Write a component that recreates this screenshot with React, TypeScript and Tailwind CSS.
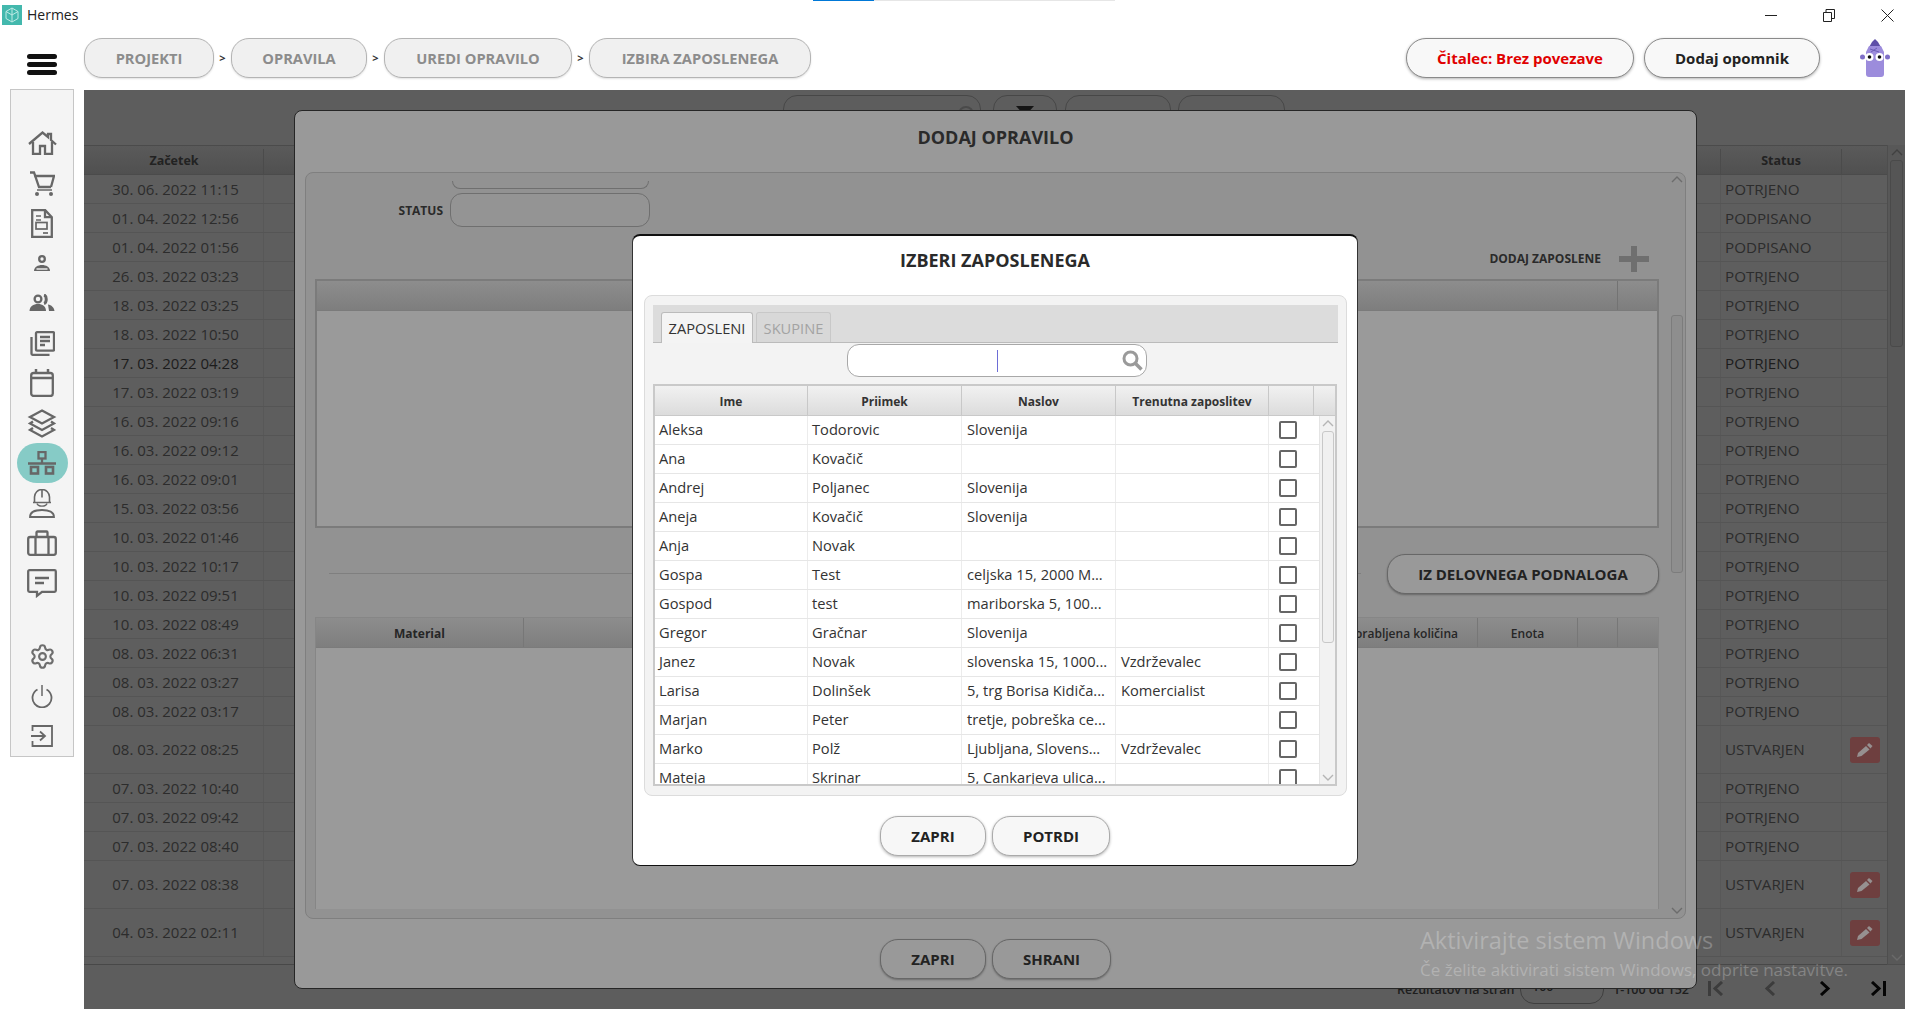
import { Settings } from 'lucide-react';

const orders = [
	['30. 06. 2022 11:15', 'POTRJENO'],
	['01. 04. 2022 12:56', 'PODPISANO'],
	['01. 04. 2022 01:56', 'PODPISANO'],
	['26. 03. 2022 03:23', 'POTRJENO'],
	['18. 03. 2022 03:25', 'POTRJENO'],
	['18. 03. 2022 10:50', 'POTRJENO'],
	['17. 03. 2022 04:28', 'POTRJENO'],
	['17. 03. 2022 03:19', 'POTRJENO'],
	['16. 03. 2022 09:16', 'POTRJENO'],
	['16. 03. 2022 09:12', 'POTRJENO'],
	['16. 03. 2022 09:01', 'POTRJENO'],
	['15. 03. 2022 03:56', 'POTRJENO'],
	['10. 03. 2022 01:46', 'POTRJENO'],
	['10. 03. 2022 10:17', 'POTRJENO'],
	['10. 03. 2022 09:51', 'POTRJENO'],
	['10. 03. 2022 08:49', 'POTRJENO'],
	['08. 03. 2022 06:31', 'POTRJENO'],
	['08. 03. 2022 03:27', 'POTRJENO'],
	['08. 03. 2022 03:17', 'POTRJENO'],
	['08. 03. 2022 08:25', 'USTVARJEN'],
	['07. 03. 2022 10:40', 'POTRJENO'],
	['07. 03. 2022 09:42', 'POTRJENO'],
	['07. 03. 2022 08:40', 'POTRJENO'],
	['07. 03. 2022 08:38', 'USTVARJEN'],
	['04. 03. 2022 02:11', 'USTVARJEN'],
];

const employees = [
	['Aleksa', 'Todorovic', 'Slovenija', ''],
	['Ana', 'Kovačič', '', ''],
	['Andrej', 'Poljanec', 'Slovenija', ''],
	['Aneja', 'Kovačič', 'Slovenija', ''],
	['Anja', 'Novak', '', ''],
	['Gospa', 'Test', 'celjska 15, 2000 M...', ''],
	['Gospod', 'test', 'mariborska 5, 100...', ''],
	['Gregor', 'Gračnar', 'Slovenija', ''],
	['Janez', 'Novak', 'slovenska 15, 1000...', 'Vzdrževalec'],
	['Larisa', 'Dolinšek', '5, trg Borisa Kidiča...', 'Komercialist'],
	['Marjan', 'Peter', 'tretje, pobreška ce...', ''],
	['Marko', 'Polž', 'Ljubljana, Slovens...', 'Vzdrževalec'],
	['Mateja', 'Skrinar', '5, Cankarjeva ulica...', ''],
];

function Crumb({ label, width }: { label: string; width: string }) {
	return (
		<div className={`flex h-10 items-center justify-center rounded-[18px] border border-[#b4b4b4] bg-[#f0f0f0] text-[14.67px] font-bold text-[#8c8c8c] shadow-[0_1px_2px_rgba(0,0,0,0.12)] ${width}`}>
			{label}
		</div>
	);
}

function Sep() {
	return <span className="w-[17px] text-center text-[11px] font-bold text-[#333]">&gt;</span>;
}

function Chevron({ up, color = '#b5b5b5' }: { up?: boolean; color?: string }) {
	return (
		<svg width="12" height="8" viewBox="0 0 12 8" fill="none" stroke={color} strokeWidth="1.4">
			<path d={up ? 'M1 7l5-5 5 5' : 'M1 1l5 5 5-5'} />
		</svg>
	);
}

function SideIcon({ children, active }: { children: React.ReactNode; active?: boolean }) {
	return (
		<div className="relative flex h-10 w-full items-center justify-center">
			{active && <div className="absolute left-[6px] top-0 h-10 w-[51px] rounded-full bg-[#86cbc6]" />}
			<div className="relative">{children}</div>
		</div>
	);
}

function Ico({ w, h, children }: { w: number; h: number; children: React.ReactNode }) {
	return (
		<svg width={w} height={h} viewBox={`0 0 ${w} ${h}`} fill="none" stroke="#676767" strokeWidth="2.3" className="block">
			{children}
		</svg>
	);
}

function Sidebar() {
	return (
		<div className="mt-[-1px] ml-[10px] flex h-[668px] w-[64px] shrink-0 flex-col border border-[#c6c6c6] bg-[#f4f4f4] pt-[33px]">
			<SideIcon>
				<Ico w={29} h={24}>
					<path d="M1 13L14.5 1.5 20 6V3h3v6l5 4.5" />
					<path d="M5 11v12h7v-8h5v8h7V11" />
				</Ico>
			</SideIcon>
			<SideIcon>
				<Ico w={26} h={25}>
					<path d="M1 1.5h4L10 16h12" />
					<path d="M5.5 5H25l-3 11" />
					<path d="M8 19h15" strokeWidth="1.5" />
					<circle cx="8" cy="23" r="2" fill="#676767" stroke="none" />
					<circle cx="22" cy="23" r="2" fill="#676767" stroke="none" />
				</Ico>
			</SideIcon>
			<SideIcon>
				<Ico w={22} h={29}>
					<path d="M1.2 1.2h13l6.6 7v19.6H1.2z" />
					<path d="M14 1.2v7h6.8" />
					<path d="M5 7h5M5 11h5" strokeWidth="1.6" />
					<rect x="5" y="13.5" width="11" height="6.5" strokeWidth="1.7" />
					<path d="M12 24h5" strokeWidth="1.7" />
				</Ico>
			</SideIcon>
			<SideIcon>
				<Ico w={18} h={17}>
					<circle cx="9" cy="4" r="2.8" />
					<path d="M1 16c0-4 4-6 8-6s8 2 8 6z" fill="#676767" stroke="none" />
					<path d="M3.5 14h11" stroke="#f4f4f4" strokeWidth="1.4" />
				</Ico>
			</SideIcon>
			<SideIcon>
				<Ico w={26} h={18}>
					<circle cx="9" cy="5" r="3.4" />
					<path d="M15 1c3 .8 3 7.6 0 8.5" strokeWidth="3" />
					<path d="M0.5 17c0-4.5 4-7 8.5-7s8 2.5 8 7z" fill="#676767" stroke="none" />
					<path d="M19 10.5c3.5.5 6 3 6.5 6.5H20" fill="#676767" stroke="none" />
				</Ico>
			</SideIcon>
			<SideIcon>
				<Ico w={25} h={25}>
					<rect x="6" y="1.2" width="18" height="18.5" rx="1" />
					<path d="M1.5 6v16.8a1 1 0 0 0 1 1h17" />
					<path d="M10 6h10M10 10h10M10 14h5" />
				</Ico>
			</SideIcon>
			<SideIcon>
				<Ico w={24} h={28}>
					<rect x="1.2" y="4" width="21.6" height="23" rx="2.5" />
					<path d="M1.2 9h21.6" strokeWidth="2.5" />
					<path d="M6 0v5M18 0v5" strokeWidth="2.5" />
				</Ico>
			</SideIcon>
			<SideIcon>
				<Ico w={30} h={29}>
					<path d="M15 1.5L27 8 15 14.5 3 8z" />
					<path d="M6 12.5L3 14.5 15 21l12-6.5-3-2" />
					<path d="M6 19L3 21l12 6.5L27 21l-3-2" />
				</Ico>
			</SideIcon>
			<SideIcon active>
				<Ico w={30} h={24}>
					<rect x="11.5" y="1" width="7" height="6.5" />
					<path d="M15 7.5V13M1 12.5h28" />
					<rect x="4" y="16" width="7" height="6.5" strokeWidth="2.6" />
					<rect x="19" y="16" width="7" height="6.5" strokeWidth="2.6" />
				</Ico>
			</SideIcon>
			<SideIcon>
				<Ico w={26} h={29}>
					<path d="M5.5 13V8a7.500 7.500 0 0 1 15 0v5" strokeWidth="1.6" />
					<path d="M13 .5v8M4 13.5h18" strokeWidth="1.6" />
					<path d="M8 14.5c1 3.500 9 3.500 10 0" strokeWidth="1.4" />
					<path d="M1 28c0-5 5-7 12-7s12 2 12 7z" strokeWidth="1.8" />
				</Ico>
			</SideIcon>
			<SideIcon>
				<Ico w={30} h={26}>
					<rect x="1.2" y="7" width="27.6" height="17.8" rx="2" />
					<path d="M9.5 7V2.5a1 1 0 0 1 1-1h9a1 1 0 0 1 1 1V7" />
					<path d="M8.5 7v18M21.5 7v18" />
				</Ico>
			</SideIcon>
			<SideIcon>
				<Ico w={30} h={29}>
					<path d="M2.5 1.2h25a1.3 1.3 0 0 1 1.3 1.3v19a1.3 1.3 0 0 1-1.3 1.3H15l-5 4v-4H2.5a1.3 1.3 0 0 1-1.3-1.3v-19a1.3 1.3 0 0 1 1.3-1.3z" />
					<path d="M8 9h14M8 14h9" />
				</Ico>
			</SideIcon>
			<div className="h-[33px]" />
			<SideIcon>
				<Settings size={27} color="#6e6e6e" strokeWidth={1.9} />
			</SideIcon>
			<SideIcon>
				<Ico w={22} h={23}>
					<path d="M11 0v11" strokeWidth="1.5" />
					<path d="M6.5 4.5a9.5 9.5 0 1 0 9 0" strokeWidth="1.8" />
				</Ico>
			</SideIcon>
			<SideIcon>
				<Ico w={22} h={22}>
					<path d="M1.5 6V1h19.5v20H1.5v-5" strokeWidth="1.8" />
					<path d="M0 11h13M9 6.5l5 4.5-5 4.5" strokeWidth="1.8" />
				</Ico>
			</SideIcon>
		</div>
	);
}

function EditButton() {
	return (
		<div className="flex h-[26px] w-[30px] items-center justify-center rounded-[3px] bg-[#6e3f3f]">
			<svg width="16" height="14" viewBox="0 0 16 14" fill="#969090">
				<path d="M0 14l1-4 8-7 3.5 3.5-8 6.5z" />
				<path d="M10 2l2-2 3.5 3-2 2.5z" />
			</svg>
		</div>
	);
}

function BackgroundTable() {
	return (
		<div className="flex min-w-0 flex-1 flex-col overflow-hidden bg-[#5d5d5d]">
			<div className="flex h-[55px] items-start pl-[699px] pt-[5px]">
				<div className="flex h-[35px] w-[198px] justify-end rounded-[14px] border border-[#474747] pr-[6px] pt-[10px]">
					<div className="h-4 w-4 rounded-full border-2 border-[#4a4a4a]" />
				</div>
				<div className="ml-[12px] flex h-[35px] w-[64px] justify-center rounded-[14px] border border-[#474747] pt-[10px]">
					<div className="h-0 w-0 border-x-[9px] border-t-[10px] border-x-transparent border-t-[#151515]" />
				</div>
				<div className="ml-[8px] h-[35px] w-[106px] rounded-[14px] border border-[#474747]" />
				<div className="ml-[7px] h-[35px] w-[107px] rounded-[14px] border border-[#474747]" />
			</div>
			<div className="flex h-[820px]">
				<div className="flex min-w-0 flex-1 flex-col border-b border-[#484848]">
					<div className="flex h-[30px] shrink-0 items-center border-y border-[#4b4b4b] bg-gradient-to-b from-[#5a5a5a] to-[#505050] pt-[3px] text-[12.5px] font-bold text-[#222]">
						<div className="flex h-full w-[180px] items-center justify-center border-r border-[#4b4b4b] pl-[1px]">Začetek</div>
						<div className="flex-1" />
						<div className="flex h-full w-[122px] items-center justify-center border-x border-[#4b4b4b]">Status</div>
						<div className="w-[45px]" />
					</div>
					{orders.map(([date, status], i) => (
						<div
							key={date}
							className={`flex shrink-0 items-center border-b border-[#555] bg-[#5e5e5e] ${i === 6 ? 'text-[#1c1c1c]' : 'text-[#2c2c2c]'} ${status === 'USTVARJEN' ? 'h-12' : 'h-[29px]'}`}
						>
							<div className="flex h-full w-[180px] items-center justify-center border-r border-[#585858] pl-[4px] text-[15px]">{date}</div>
							<div className="flex-1" />
							<div className="flex h-full w-[122px] items-center border-x border-[#585858] pl-[4px] text-[15.2px]">{status}</div>
							<div className="flex h-full w-[45px] items-center pl-[8px]">{status === 'USTVARJEN' && <EditButton />}</div>
						</div>
					))}
					<div className="flex-1 bg-[#5e5e5e]" />
				</div>
				<div className="flex w-[18px] shrink-0 flex-col items-center border-b border-l border-[#4e4e4e] bg-[#585858] pt-[3px]">
					<Chevron up color="#414141" />
					<div className="mt-[4px] h-[187px] w-[13px] rounded-[3px] border border-[#4a4a4a] bg-[#555]" />
					<div className="mt-auto mb-[2px]">
						<Chevron color="#6a6a6a" />
					</div>
				</div>
			</div>
			<div className="flex h-[44px] items-center pl-[1313px] text-[12.5px] font-semibold text-[#1e1e1e]">
				<span className="mt-[6px] w-[123px]">Rezultatov na stran</span>
				<div className="flex h-[34px] w-[84px] items-center rounded-[14px] border border-[#3f3f3f] pl-[11px]">100</div>
				<span className="ml-[9px] mt-[6px] w-[80px]">1-100 od 152</span>
				<svg width="178" height="15" viewBox="0 0 178 15" fill="none" strokeWidth="3" className="ml-[15px] mt-[3px]">
					<path d="M1.5 0v15M14 1L7 7.5l7 6.5" stroke="#3c3c3c" />
					<path d="M66 1l-7 6.5 7 6.5" stroke="#3c3c3c" />
					<path d="M113 1l7 6.5-7 6.5" stroke="#050505" />
					<path d="M164 1l7 6.5-7 6.5M176.5 0v15" stroke="#050505" />
				</svg>
			</div>
		</div>
	);
}

function GrayPill({ label, width }: { label: string; width: string }) {
	return (
		<div className={`flex h-10 items-center justify-center rounded-[18px] border border-[#676767] bg-[#999] pt-[1px] text-[15px] font-bold text-[#222] shadow-[0_1px_2px_rgba(0,0,0,0.3)] ${width}`}>
			{label}
		</div>
	);
}

function WhitePill({ label, width }: { label: string; width: string }) {
	return (
		<div className={`flex h-10 items-center justify-center rounded-[18px] border border-[#aaa] bg-[#f7f7f7] text-[15px] font-bold text-[#222] shadow-[0_1px_3px_rgba(0,0,0,0.3)] ${width}`}>
			{label}
		</div>
	);
}

function TaskDialog() {
	return (
		<div className="absolute left-[294px] top-[110px] flex h-[879px] w-[1403px] flex-col rounded-[8px] border border-[#262626] bg-[#999]">
			<div className="flex h-[61px] shrink-0 items-center justify-center pb-[9px] text-[18px] font-bold text-[#2a2a2a]">DODAJ OPRAVILO</div>
			<div className="mx-[10px] flex h-[747px] shrink-0 rounded-[8px] border border-[#7f7f7f] bg-[#929292]">
				<div className="flex w-[1363px] flex-col overflow-hidden pl-[9px] pr-[10px]">
					<div className="ml-[137px] mt-[8px] h-[8px] w-[197px] shrink-0 rounded-b-[10px] border-x border-b border-[#6f6f6f]" />
					<div className="mt-[4px] flex h-[34px] shrink-0 items-center">
						<span className="w-[129px] pr-[1px] pt-[2px] text-right text-[12px] font-bold text-[#2a2a2a]">STATUS</span>
						<div className="ml-[6px] h-[34px] w-[200px] rounded-[12px] border border-[#6f6f6f] bg-[#949494]" />
					</div>
					<div className="mt-[19px] flex h-[26px] shrink-0 items-center justify-end pr-[10px]">
						<span className="text-[12px] font-bold text-[#2a2a2a]">DODAJ ZAPOSLENE</span>
						<svg width="30" height="26" viewBox="0 0 30 26" fill="#6f6f6f" className="ml-[18px]">
							<path d="M12 0h6v10h12v6H18v10h-6V16H0v-6h12z" />
						</svg>
					</div>
					<div className="mt-[7px] flex h-[249px] shrink-0 flex-col border-2 border-[#7b7b7b] bg-[#9a9a9a]">
						<div className="flex h-[30px] border-b border-[#7b7b7b] bg-gradient-to-b from-[#8d8d8d] to-[#7e7e7e]">
							<div className="flex-1" />
							<div className="w-[40px] border-l border-[#737373]" />
						</div>
					</div>
					<div className="mt-[26px] flex h-[39px] shrink-0 items-center">
						<div className="ml-[14px] mr-[26px] h-px flex-1 bg-[#7f7f7f]" />
						<GrayPill label="IZ DELOVNEGA PODNALOGA" width="w-[272px]" />
					</div>
					<div className="mt-[24px] flex h-[292px] shrink-0 flex-col border-x border-t border-[#868686] bg-[#9a9a9a]">
						<div className="flex h-[30px] shrink-0 items-center border-b border-[#7b7b7b] bg-gradient-to-b from-[#8d8d8d] to-[#7e7e7e] text-[12px] font-bold text-[#262626]">
							<div className="flex h-full w-[208px] items-center justify-center border-r border-[#777] pt-[3px]">Material</div>
							<div className="flex h-full w-[954px] items-center justify-end border-r border-[#777] pr-[19px] pt-[3px] font-semibold">Porabljena količina</div>
							<div className="flex h-full w-[100px] items-center justify-center border-r border-[#777] pt-[3px] font-semibold">Enota</div>
							<div className="h-full w-[40px] border-r border-[#777]" />
						</div>
					</div>
				</div>
				<div className="flex w-[15px] flex-col items-center pt-[2px]">
					<Chevron up color="#6c6c6c" />
					<div className="mt-[132px] h-[258px] w-[12px] rounded-[3px] border border-[#7c7c7c] bg-[#8e8e8e]" />
					<div className="mt-auto mb-[3px]">
						<Chevron color="#6c6c6c" />
					</div>
				</div>
			</div>
			<div className="flex gap-[6px] pl-[585px] pt-[20px]">
				<GrayPill label="ZAPRI" width="w-[106px]" />
				<GrayPill label="SHRANI" width="w-[119px]" />
			</div>
		</div>
	);
}

function EmployeeDialog() {
	return (
		<div className="absolute left-[632px] top-[234px] flex h-[632px] w-[726px] flex-col rounded-[8px] border border-x-[#333] border-y-[#111] border-t-2 bg-white">
			<div className="flex h-[59px] shrink-0 items-center justify-center pb-[10px] text-[18px] font-bold text-[#2a2a2a]">IZBERI ZAPOSLENEGA</div>
			<div className="ml-[11px] mr-[10px] flex h-[501px] shrink-0 flex-col rounded-[8px] border border-[#dcdcdc] bg-[#f3f3f3] pl-[8px] pt-[9px]">
				<div className="flex h-[38px] w-[685px] shrink-0 items-end border-b border-[#bbb] bg-[#dcdcdc] pl-[8px] text-[14.67px]">
					<div className="mb-[-1px] flex h-[31px] w-[92px] items-center justify-center rounded-t-[3px] border border-b-0 border-[#bbb] bg-[#f4f4f4] text-[#333]">ZAPOSLENI</div>
					<div className="ml-[3px] flex h-[30px] w-[75px] items-center justify-center rounded-t-[3px] border border-b-0 border-[#c8c8c8] bg-[#d8d8d8] text-[#a3a3a3]">SKUPINE</div>
				</div>
				<div className="ml-[194px] mt-px flex h-[33px] w-[300px] shrink-0 items-center rounded-[12px] border border-[#a8a8a8] bg-white">
					<div className="ml-[149px] h-[22px] w-px bg-[#6d6dd6]" />
					<svg width="21" height="21" viewBox="0 0 21 21" fill="none" stroke="#9a9a9a" className="ml-auto mr-[3px]">
						<circle cx="8.5" cy="8.5" r="6.5" strokeWidth="3" />
						<path d="M13.5 13.5l6 6" strokeWidth="3.5" />
					</svg>
				</div>
				<div className="mt-[7px] flex h-[402px] w-[684px] shrink-0 flex-col border-2 border-[#c9c9c9] bg-white">
					<div className="grid h-[30px] shrink-0 grid-cols-[153px_154px_154px_153px_45px_21px] border-b border-[#c9c9c9] bg-gradient-to-b from-[#f1f1f1] to-[#dcdcdc] text-[12px] font-bold text-[#333]">
						<div className="flex items-center justify-center border-r border-[#c8c8c8] pt-[2px]">Ime</div>
						<div className="flex items-center justify-center border-r border-[#c8c8c8] pt-[2px]">Priimek</div>
						<div className="flex items-center justify-center border-r border-[#c8c8c8] pt-[2px]">Naslov</div>
						<div className="flex items-center justify-center border-r border-[#c8c8c8] pt-[2px]">Trenutna zaposlitev</div>
						<div className="border-r border-[#c8c8c8]" />
						<div />
					</div>
					<div className="flex min-h-0 flex-1 overflow-hidden">
						<div className="w-[664px] shrink-0">
							{employees.map(([name, surname, address, job]) => (
								<div key={name} className="grid h-[29px] grid-cols-[153px_154px_154px_153px_50px] border-b border-[#e6e6e6] text-[14.67px] text-[#333]">
									<div className="flex items-center border-r border-[#ececec] pb-[2px] pl-[4px]">{name}</div>
									<div className="flex items-center border-r border-[#ececec] pb-[2px] pl-[4px]">{surname}</div>
									<div className="flex items-center whitespace-nowrap border-r border-[#ececec] pb-[2px] pl-[5px]">{address}</div>
									<div className="flex items-center border-r border-[#ececec] pb-[2px] pl-[5px]">{job}</div>
									<div className="flex items-center pl-[10px]">
										<div className="h-[18px] w-[18px] rounded-[2px] border-2 border-[#666] bg-white" />
									</div>
								</div>
							))}
						</div>
						<div className="flex w-[16px] shrink-0 flex-col items-center border-l border-[#e4e4e4] bg-[#f2f2f2] pt-[3px]">
							<Chevron up />
							<div className="mt-[4px] h-[212px] w-[12px] rounded-[3px] border border-[#c8c8c8] bg-[#f0f0f0]" />
							<div className="mt-auto mb-[2px]">
								<Chevron />
							</div>
						</div>
					</div>
				</div>
			</div>
			<div className="flex gap-[6px] pl-[247px] pt-[20px]">
				<WhitePill label="ZAPRI" width="w-[106px]" />
				<WhitePill label="POTRDI" width="w-[118px]" />
			</div>
		</div>
	);
}

export default function App() {
	return (
		<div className="relative h-[1027px] w-[1915px] overflow-hidden bg-white font-['Open_Sans',sans-serif]">
			{/* window title bar */}
			<div className="relative flex h-[30px] items-center">
				<div className="absolute left-[813px] top-0 flex h-px">
					<div className="w-[61px] bg-[#0078d7]" />
					<div className="w-[241px] bg-[#e6e6e6]" />
				</div>
				<div className="ml-[2px] flex h-5 w-5 items-center justify-center bg-[#43b8ad]">
					<svg width="14" height="16" viewBox="0 0 14 16" fill="none" stroke="#bfeae5" strokeWidth="1">
						<path d="M7 1l6 3.5v7L7 15l-6-3.5v-7zM7 1v14M1 4.5L7 8l6-3.5" />
					</svg>
				</div>
				<span className="ml-[5px] mt-[-2px] text-[14px] text-[#222]">Hermes</span>
				<div className="ml-auto mr-[21px] flex items-center gap-[46px]">
					<div className="h-px w-[12px] bg-[#222]" />
					<svg width="12" height="13" viewBox="0 0 12 13" fill="none" stroke="#222">
						<path d="M.5 3.5h8v9h-8zM3 3.5v-3h8.5v9H8.5" />
					</svg>
					<svg width="13" height="13" viewBox="0 0 13 13" fill="none" stroke="#222">
						<path d="M.5.5l12 12M12.5.5l-12 12" />
					</svg>
				</div>
			</div>

			{/* toolbar */}
			<div className="flex h-[60px] items-start pt-[8px]">
				<div className="ml-[27px] mt-[16px] flex w-[30px] flex-col gap-[3px]">
					<div className="h-[5px] rounded-full bg-[#111]" />
					<div className="h-[5px] rounded-full bg-[#111]" />
					<div className="h-[5px] rounded-full bg-[#111]" />
				</div>
				<div className="ml-[27px] flex items-center">
					<Crumb label="PROJEKTI" width="w-[130px]" />
					<Sep />
					<Crumb label="OPRAVILA" width="w-[136px]" />
					<Sep />
					<Crumb label="UREDI OPRAVILO" width="w-[188px]" />
					<Sep />
					<Crumb label="IZBIRA ZAPOSLENEGA" width="w-[222px]" />
				</div>
				<div className="ml-auto flex items-center">
					<div className="flex h-10 w-[228px] items-center justify-center rounded-[20px] border border-[#8a8a8a] bg-[#f8f8f8] text-[15px] font-bold text-[#e00000] shadow-[0_1px_3px_rgba(0,0,0,0.3)]">Čitalec: Brez povezave</div>
					<div className="ml-[10px] flex h-10 w-[176px] items-center justify-center rounded-[20px] border border-[#8a8a8a] bg-[#f8f8f8] text-[15px] font-bold text-[#222] shadow-[0_1px_3px_rgba(0,0,0,0.3)]">Dodaj opomnik</div>
					<svg width="30" height="38" viewBox="0 0 30 38" className="ml-[40px] mr-[25px]">
						<path d="M15 0l3 3 4 7H8l4-7z" fill="#5e4fa8" />
						<path d="M6 13l3-6h12l3 6v22a3 3 0 0 1-3 3H9a3 3 0 0 1-3-3z" fill="#9c8cdc" />
						<circle cx="2.5" cy="18" r="2.5" fill="#7f6fc8" />
						<circle cx="27.5" cy="18" r="2.5" fill="#7f6fc8" />
						<circle cx="9.5" cy="18" r="4" fill="#fff" />
						<circle cx="19.5" cy="18" r="4" fill="#fff" />
						<circle cx="9.5" cy="18" r="1.8" fill="#111" />
						<circle cx="19.5" cy="18" r="1.8" fill="#111" />
						<path d="M10 10l9 3M11 13l6-4" stroke="#6e5fb8" strokeWidth="1" />
					</svg>
				</div>
			</div>

			{/* main */}
			<div className="flex h-[919px]">
				<Sidebar />
				<div className="ml-[10px] mr-[10px] flex min-w-0 flex-1">
					<BackgroundTable />
				</div>
			</div>

			<TaskDialog />
			<EmployeeDialog />

			{/* activation watermark */}
			<div className="pointer-events-none absolute left-[1420px] top-[924px] text-white/25">
				<div className="text-[23.5px] leading-[32px]">Aktivirajte sistem Windows</div>
				<div className="mt-[2px] text-[17px] leading-[24px]">Če želite aktivirati sistem Windows, odprite nastavitve.</div>
			</div>
		</div>
	);
}
